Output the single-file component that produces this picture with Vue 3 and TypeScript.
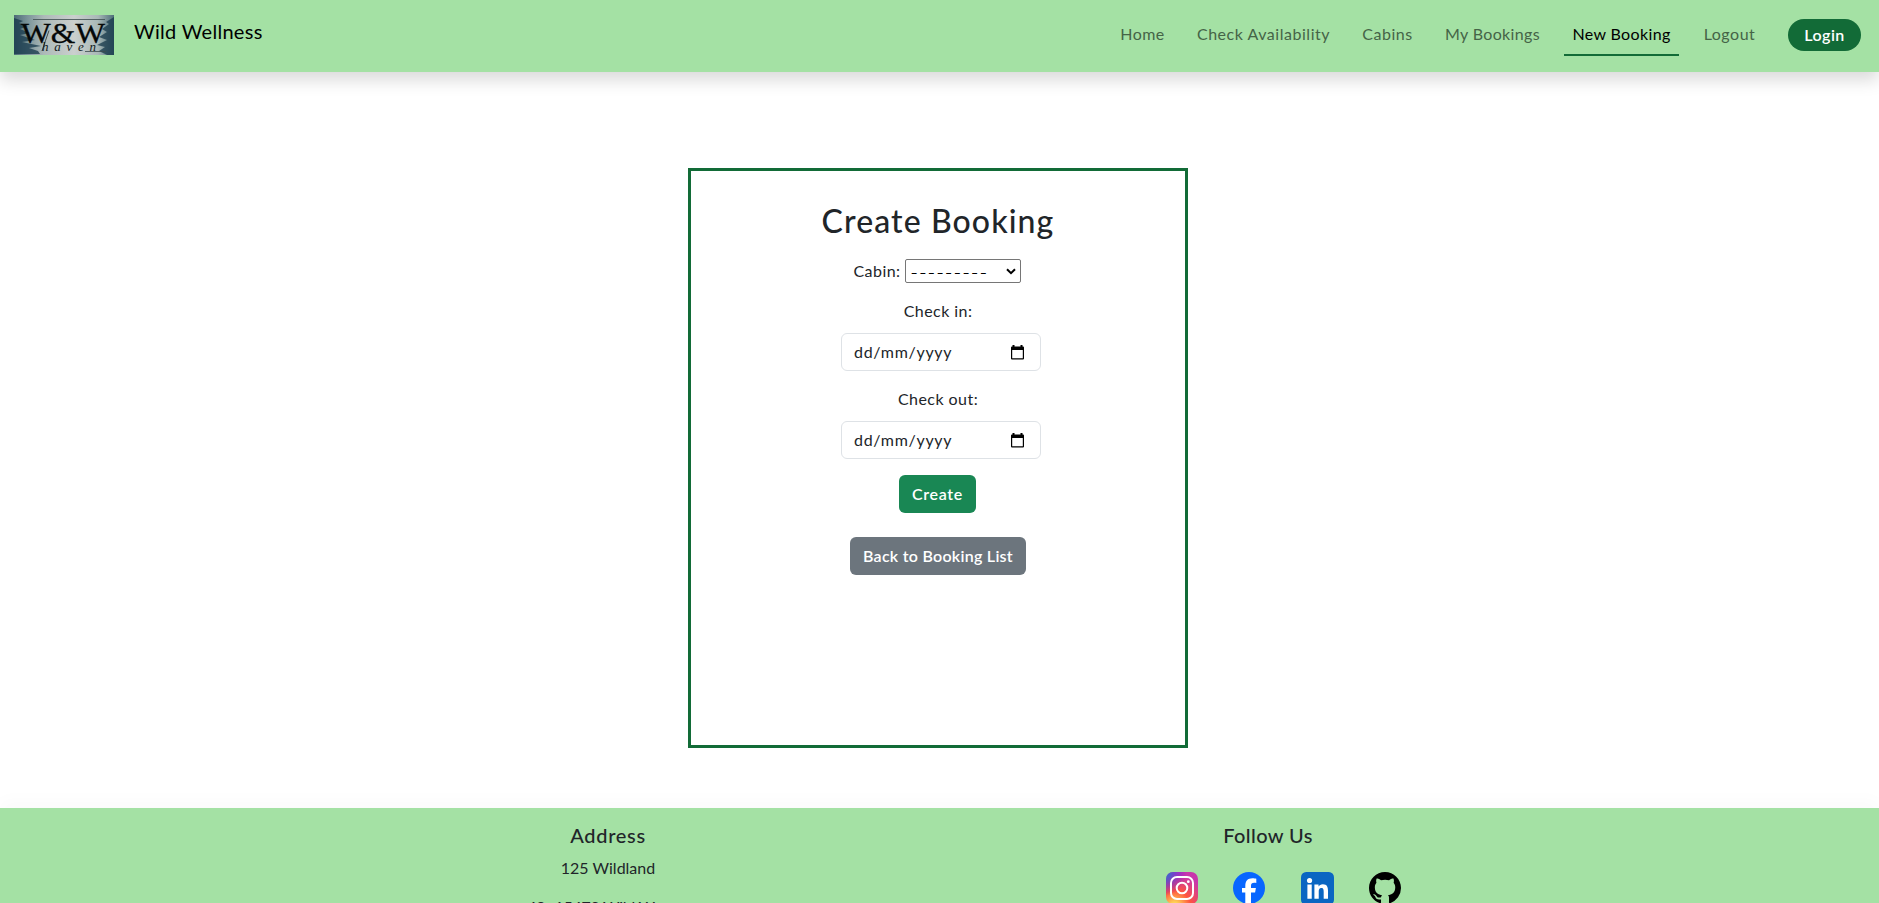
<script setup lang="ts">
interface NavItem { label: string; cls: string }
const navItems: NavItem[] = [
  { label: 'Home', cls: 'home' },
  { label: 'Check Availability', cls: 'avail' },
  { label: 'Cabins', cls: 'cabins' },
  { label: 'My Bookings', cls: 'mine' },
  { label: 'New Booking', cls: 'new active' },
  { label: 'Logout', cls: 'logout' },
]
const fields: string[] = ['Check in:', 'Check out:']
</script>

<template>
  <div class="page">
    <header class="bar">
      <a class="brand">
        <svg class="logo" viewBox="0 0 100 40" aria-label="Wild Wellness Haven">
          <defs>
            <linearGradient id="mist" x1="0" x2="1" y1="0" y2="0">
              <stop offset="0" stop-color="#4c6b76" />
              <stop offset=".14" stop-color="#7d969b" />
              <stop offset=".3" stop-color="#adb9b8" />
              <stop offset=".6" stop-color="#cbd0ce" />
              <stop offset=".84" stop-color="#a9b8b7" />
              <stop offset="1" stop-color="#4d6d78" />
            </linearGradient>
            <filter id="soft"><feGaussianBlur stdDeviation=".7" /></filter>
          </defs>
          <rect width="100" height="40" fill="url(#mist)" />
          <g filter="url(#soft)" fill="#17394b" opacity=".75">
            <path d="M0 3l9 3-4 2 9 3-8 3 10 4-10 2 15 5-13 2 19 4-12 2 9 3 2 3H0z" />
            <path d="M100 2l-8 5 3 2-7 5 5 3-8 5 8 3-10 5 8 2-6 4 8 4H100z" />
          </g>
          <path d="M19 4.500H91M71 36.500H92" stroke="#3b4b4e" stroke-width=".8" />
          <text class="mono" x="7" y="28" textLength="84" lengthAdjust="spacingAndGlyphs">W&amp;W</text>
          <path d="M28 36C30 29 33 22 35 15.500" fill="none" stroke="#10191b" stroke-width=".7" />
          <text class="haven" x="28" y="36" textLength="54">haven</text>
        </svg>
        <span class="name">Wild Wellness</span>
      </a>
      <nav>
        <a v-for="n in navItems" :key="n.label" :class="n.cls"><span>{{ n.label }}</span></a>
        <a class="login"><span>Login</span></a>
      </nav>
    </header>

    <main>
      <section class="card">
        <h2><span>Create Booking</span></h2>
        <div class="cabin">
          <label><span>Cabin:</span></label>
          <div class="select"><span class="dashes">---------</span>
            <svg viewBox="0 0 10 7"><path d="M1 1.200L5 5.200L9 1.200" fill="none" stroke="#000" stroke-width="2" /></svg>
          </div>
        </div>
        <div v-for="f in fields" :key="f" class="field">
          <label><span>{{ f }}</span></label>
          <div class="date"><span>dd/mm/yyyy</span>
            <svg viewBox="0 0 13 15"><path d="M1.500 0h2v1.500h6V0h2v1.500h.5a1 1 0 0 1 1 1V13.500a1 1 0 0 1-1 1H1a1 1 0 0 1-1-1V2.500a1 1 0 0 1 1-1h.5zM1.200 5v8.200h10.600V5z" /></svg>
          </div>
        </div>
        <button class="create"><span>Create</span></button>
        <button class="back"><span>Back to Booking List</span></button>
      </section>
    </main>

    <footer>
      <div class="col address">
        <h5><span>Address</span></h5>
        <p><span>125 Wildland</span></p>
        <p class="city"><span>49 -15478 Wild W</span></p>
      </div>
      <div class="col follow">
        <h5><span>Follow Us</span></h5>
        <div class="social">
          <svg viewBox="0 0 32 32">
            <defs>
              <radialGradient id="warm" cx=".27" cy="1.080" r="1">
                <stop offset="0" stop-color="#fd5" /><stop offset=".1" stop-color="#fd5" />
                <stop offset=".5" stop-color="#ff543e" /><stop offset="1" stop-color="#c837ab" />
              </radialGradient>
              <radialGradient id="cool" cx="-.1" cy="0" r=".75">
                <stop offset="0" stop-color="#3771c8" /><stop offset=".2" stop-color="#3771c8" />
                <stop offset="1" stop-color="#60f" stop-opacity="0" />
              </radialGradient>
            </defs>
            <rect width="32" height="32" rx="7" fill="url(#warm)" /><rect width="32" height="32" rx="7" fill="url(#cool)" />
            <rect x="5" y="5" width="22" height="22" rx="6" fill="none" stroke="#fff" stroke-width="2" />
            <circle cx="16" cy="16" r="5.300" fill="none" stroke="#fff" stroke-width="2" /><circle cx="22.300" cy="9.700" r="1.400" fill="#fff" />
          </svg>
          <svg viewBox="0 0 32 32">
            <circle cx="16" cy="16" r="16" fill="#0866ff" />
            <path fill="#fff" d="M12.300 32V20.500H9V16h3.300v-2.100c0-5 2.300-7.700 7.200-7.700 1.400 0 2.900.2 3.800.5v4.200c-.6-.1-1.400-.1-2.100-.1-2.400 0-3.200.9-3.200 3.200v2h4.900l-.8 4.500H18V32z" />
          </svg>
          <svg class="linkedin" viewBox="0 0 32 32">
            <rect width="32" height="32" rx="5" fill="#0a66c2" />
            <g fill="#fff"><circle cx="8.300" cy="8.200" r="2.500" /><path d="M6.200 12.200h4.200V26H6.200zM13 12.200h4v1.900c.7-1.300 2.200-2.300 4.200-2.300 4.200 0 5 2.800 5 6.400V26H22v-6.900c0-1.700-.1-3.700-2.300-3.700s-2.500 1.800-2.500 3.600v7H13z" /></g>
          </svg>
          <svg viewBox="0 0 16 16"><path d="M8 0C3.580 0 0 3.580 0 8c0 3.540 2.290 6.530 5.470 7.590.4.070.55-.17.55-.38 0-.19-.01-.82-.01-1.490-2.010.37-2.530-.49-2.690-.94-.09-.23-.48-.94-.82-1.130-.28-.15-.68-.52-.01-.53.63-.01 1.080.58 1.230.82.72 1.210 1.870.87 2.330.66.07-.52.28-.87.51-1.070-1.780-.2-3.640-.89-3.640-3.950 0-.87.31-1.590.82-2.150-.08-.2-.36-1.020.08-2.120 0 0 .67-.21 2.200.82.64-.18 1.320-.27 2-.27s1.360.09 2 .27c1.530-1.040 2.200-.82 2.200-.82.44 1.100.16 1.920.08 2.120.51.56.82 1.270.82 2.150 0 3.070-1.870 3.750-3.650 3.950.29.25.54.73.54 1.480 0 1.070-.01 1.930-.01 2.200 0 .21.15.46.55.38A8.010 8.010 0 0 0 16 8c0-4.420-3.580-8-8-8z" /></svg>
        </div>
      </div>
    </footer>
  </div>
</template>

<style>
body { margin: 0; overflow: hidden; }
</style>

<style scoped>
* { box-sizing: border-box; }
.page { height: 903px; overflow: hidden; display: flex; flex-direction: column; font: 400 16px/24px Lato, "Open Sans", sans-serif; color: #212529; background: #fff; }
span { white-space: nowrap; }
.bar { height: 72px; flex: none; display: flex; justify-content: space-between; padding: 0 18px 0 14px; background: #a4e1a4; box-shadow: 0 8px 16px rgba(0, 0, 0, .15); position: relative; }
.brand { display: flex; padding-top: 15px; color: #000; }
.logo { width: 100px; height: 40px; display: block; }
.mono { font: 29px "Liberation Serif", serif; fill: #050808; stroke: #050808; stroke-width: .3; }
.haven { font: italic 13px "Liberation Serif", serif; fill: #10191b; }
.name { margin: 1px 0 0 20px; font-size: 20px; line-height: 30px; letter-spacing: .29px; }
nav { display: flex; gap: 16px; padding-top: 14px; color: #456447; letter-spacing: .5px; }
nav a { height: 42px; padding: 8px 0; text-align: center; border-bottom: 2px solid transparent; }
nav .active { color: #000; border-color: #126b37; }
nav .login { width: 73px; height: 32px; margin: 5px 0 0 8px; padding: 4px 0; border: 0; border-radius: 16px; background: #126b37; color: #fff; font-weight: 600; }
.home { width: 61px; } .avail { width: 149px; letter-spacing: .53px; } .cabins { width: 67px; } .mine { width: 111px; letter-spacing: .36px; } .new { width: 115px; letter-spacing: .36px; } .logout { width: 69px; }
main { height: 736px; flex: none; padding: 96px 0 0 688px; }
.card { width: 500px; height: 580px; border: 3px solid #126b37; display: flex; flex-direction: column; align-items: center; letter-spacing: .45px; }
h2 { margin: 31px 0 0; font-size: 32px; line-height: 38px; font-weight: 500; letter-spacing: 1.100px; }
.cabin { margin: 17px 2px 0 0; height: 28px; display: flex; align-items: center; gap: 4px; }
.select { width: 116px; height: 24px; border: 1px solid #767676; border-radius: 2px; display: flex; align-items: center; justify-content: space-between; padding: 0 4px 0 5px; color: #000; line-height: 22px; }
.dashes { font-family: Inter, sans-serif; font-weight: 300; letter-spacing: 1.400px; line-height: 24px; padding-top: 2px; }
.select svg { width: 10px; height: 7px; }
.field { display: flex; flex-direction: column; align-items: center; margin-top: 14px; }
.field + .field { margin-top: 16px; }
.date { margin: 10px 0 0 6px; width: 200px; height: 38px; border: 1px solid #dee2e6; border-radius: 6px; display: flex; align-items: center; justify-content: space-between; padding: 0 16px 0 12px; letter-spacing: .7px; }
.date svg { width: 13px; height: 15px; }
button { height: 38px; padding: 0; border: 0; border-radius: 6px; font: 600 16px/24px Lato, sans-serif; color: #fff; }
.create { width: 77px; margin: 16px 1px 0 0; background: #198754; letter-spacing: .7px; }
.back { width: 176px; margin-top: 24px; background: #6c757d; letter-spacing: .27px; }
footer { flex: none; height: 140px; position: relative; display: flex; background: #a4e1a4; padding-left: 270px; box-shadow: 0 -8px 16px rgba(0, 0, 0, .02); }
.col { width: 676px; text-align: center; padding-top: 15px; }
h5 { margin: 0 0 9px; font-size: 20px; line-height: 24px; font-weight: 500; letter-spacing: .7px; }
.follow h5 { margin-left: -32px; letter-spacing: .4px; }
p { margin: 0 0 16px; line-height: 24px; }
.city { margin-top: -1px; margin-left: -34px; letter-spacing: -.3px; }
.social { display: flex; justify-content: center; gap: 35.500px; margin: 25px 0 0 -1px; }
.social svg { width: 32px; height: 32px; }
.social .linkedin { width: 33px; height: 33px; }
</style>
